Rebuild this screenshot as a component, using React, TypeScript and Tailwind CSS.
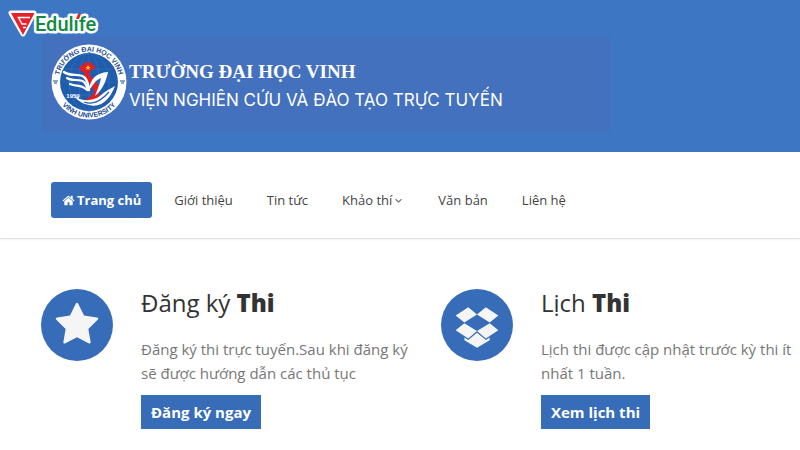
import type { ReactNode } from 'react'

const navItems = [
  { label: 'Giới thiệu' },
  { label: 'Tin tức' },
  { label: 'Khảo thí', hasMenu: true },
  { label: 'Văn bản' },
  { label: 'Liên hệ' },
]

const icons = {
  home: 'M1472 992v480q0 26-19 45t-45 19h-384v-384h-256v384h-384q-26 0-45-19t-19-45v-480q0-1 .5-3t.5-3l575-474 575 474q1 2 1 6zm223-69l-62 74q-8 9-21 11h-3q-13 0-21-7l-692-577-692 577q-12 8-24 7-13-2-21-11l-62-74q-8-10-7-23.5t11-21.5l719-599q32-26 76-26t76 26l244 204v-195q0-14 9-23t23-9h192q14 0 23 9t9 23v408l219 182q10 8 11 21.5t-7 23.5z',
  star: 'M1728 647q0 22-26 48l-363 354 86 500q1 7 1 20 0 21-10.5 35.5t-30.5 14.5q-19 0-40-12l-449-236-449 236q-22 12-40 12-21 0-31.5-14.5t-10.5-35.5q0-6 2-20l86-500-364-354q-25-27-25-48 0-37 56-46l502-73 225-455q19-41 49-41t49 41l225 455 502 73q56 9 56 46z',
  dropbox: 'M402 829l494 305-342 285-490-319zm986 555v108l-490 293v1l-1-1-1 1v-1l-489-293v-108l147 96 342-284v-2l1 1 1-1v2l343 284zm-834-1178l342 285-494 304-338-270zm836 623l338 271-489 319-343-285zm-151-623l489 319-338 270-494-304z',
  angleDown: 'M1395 736q0 13-10 23l-466 466q-10 10-23 10t-23-10l-466-466q-10-10-10-23t10-23l50-50q10-10 23-10t23 10l393 393 393-393q10-10 23-10t23 10l50 50q10 10 10 23z',
}

function Icon({ path, className }: { path: string; className: string }) {
  return (
    <svg viewBox="0 0 1792 1792" fill="currentColor" className={className} aria-hidden="true">
      <path d={path} />
    </svg>
  )
}

function EdulifeLogo() {
  return (
    <svg viewBox="0 0 100 32" className="absolute left-1 top-2 h-8 w-[100px]" role="img" aria-label="Edulife">
      <g stroke="#fff" strokeWidth="5" strokeLinejoin="round" fill="#fff">
        <path d="M7 5H30L19 26Z" />
        <text x="31" y="23" fontSize="20" fontWeight="500" fontFamily="Roboto, sans-serif">Edulife</text>
      </g>
      <path d="M7 5H30.500L19 27Z" fill="#e8212b" />
      <path d="M26 9.500H14.500L18 16H22.500M19 19.500H22" fill="none" stroke="#fff" strokeWidth="1.500" />
      <text x="31" y="23" fontSize="20" fontWeight="500" fontFamily="Roboto, sans-serif" fill="#118a43" aria-hidden="true">Edulife</text>
      <path d="M71 6H77V11H71Z" fill="#fff" />
      <path d="M72 11L74 6H77L75 11Z" fill="#e8212b" />
    </svg>
  )
}

function Emblem() {
  return (
    <svg viewBox="0 0 76 76" className="size-[76px] shrink-0" role="img" aria-label="Vinh University">
      <defs>
        <path id="ring-top" d="M7.500 38A30.500 30.500 0 0 1 68.500 38" />
        <path id="ring-bottom" d="M2.500 38A35.500 35.500 0 0 0 73.500 38" />
      </defs>
      <circle cx="38" cy="38" r="37.500" fill="#fff" />
      <circle cx="38" cy="38" r="29" fill="#1f5cad" />
      <g fill="none" stroke="#3a74bf" strokeWidth=".6">
        <ellipse cx="38" cy="38" rx="10" ry="29" />
        <ellipse cx="38" cy="38" rx="20" ry="29" />
        <path d="M38 9V67M9 38H67M14 25H62M14 51H62" />
      </g>
      <path d="M28 23L31 21H33L34 18L37 19L39 17L41 21L45 22L43 25L40 26L38 29L40 33L45 38L49 44L48 52L44 56L37 59L34 56L39 53L43 49L42 44L36 37L33 32L34 29L30 27Z" fill="#e51d23" />
      <path d="M37 21L38 23H40L38 24L39 26L37 25L35 26L36 24L34 23H36Z" fill="#ffd21c" />
      {/* wings */}
      <g fill="none" stroke="#fff" strokeLinecap="round">
        <path d="M13 28C19 33 28 29 33 33C37 36 37 41 38 46" strokeWidth="2.400" />
        <path d="M16 34C22 38 29 34 33 38C35 40 36 43 37 46" strokeWidth="2.200" />
        <path d="M19 40C25 43 30 40 36 46" strokeWidth="2.200" />
      </g>
      <path d="M38 46C39 35 45 29 57 28C55 38 51 46 44 52C46 46 49 40 50 34C44 36 42 42 38 46Z" fill="#fff" />
      <path d="M23 52C32 58 42 57 49 52C54 47 59 45 64 42C60 53 51 65 38 61C32 60 27 57 23 52Z" fill="#fff" />
      <path d="M33 58C43 62 51 56 58 48" fill="none" stroke="#1f5cad" strokeWidth="1.200" />
      <g fill="#1d4b94" fontFamily="Liberation Sans, sans-serif" fontWeight="700" textAnchor="middle">
        <text fontSize="7"><textPath href="#ring-top" startOffset="50%">TRƯỜNG ĐẠI HỌC VINH</textPath></text>
        <text fontSize="7"><textPath href="#ring-bottom" startOffset="50%">VINH UNIVERSITY</textPath></text>
        <text x="22" y="54" fontSize="6" fill="#fff">1959</text>
      </g>
      <path d="M2 37H7M3 39H6M69 37H74M70 39H73" stroke="#1d4b94" strokeWidth="1" />
    </svg>
  )
}

function Service({ icon, title, children, action }: { icon: string; title: string; children: ReactNode; action: string }) {
  return (
    <section className="flex items-start gap-7 pl-[41px]">
      <div className="flex size-18 shrink-0 items-center justify-center rounded-full bg-[#376cb8] text-[#f5f5f5]">
        <Icon path={icon} className="size-[46px]" />
      </div>
      <div>
        <h2 className="text-2xl leading-7 text-[#333]">
          {title} <strong className="font-extrabold">Thi</strong>
        </h2>
        <p className="mt-5 mb-[10px] text-[15px] leading-6 whitespace-nowrap text-[#777]">{children}</p>
        <button type="button" className="h-[34px] bg-[#376cb8] px-[10px] text-[15px] font-bold text-white">{action}</button>
      </div>
    </section>
  )
}

export default function App() {
  return (
    <div className="min-h-screen bg-white font-['Open_Sans',sans-serif]">
      <header className="relative bg-[#3d76c2] px-[42px] pt-9 pb-5">
        <EdulifeLogo />
        <div className="flex h-24 max-w-[568px] items-start gap-[2px] bg-[#4371be] px-[9px] pt-2 text-white">
          <Emblem />
          <div className="pt-[14px]">
            <h1 className="font-['Liberation_Serif',serif] text-[19px] leading-7 font-bold">TRƯỜNG ĐẠI HỌC VINH</h1>
            <p className="font-[Inter,sans-serif] text-[17px] leading-7 whitespace-nowrap">VIỆN NGHIÊN CỨU VÀ ĐÀO TẠO TRỰC TUYẾN</p>
          </div>
        </div>
      </header>

      <nav className="flex items-center border-b border-[#e2e2e2] px-[51px] pt-[30px] pb-5 text-[13px] text-[#444] shadow-xs">
        <a href="#" className="mr-[11px] flex h-9 items-center gap-[2px] rounded-[3px] bg-[#376cb8] px-[11px] pt-px font-bold text-white">
          <Icon path={icons.home} className="size-[13px]" />
          Trang chủ
        </a>
        {navItems.map((item) => (
          <a key={item.label} href="#" className="mr-3 flex h-9 items-center gap-px px-[11px] pt-px">
            {item.label}
            {item.hasMenu && <Icon path={icons.angleDown} className="size-[11px]" />}
          </a>
        ))}
      </nav>

      <main className="grid grid-cols-2 pt-[50px]">
        <Service icon={icons.star} title="Đăng ký" action="Đăng ký ngay">
          Đăng ký thi trực tuyến.Sau khi đăng ký<br />sẽ được hướng dẫn các thủ tục
        </Service>
        <Service icon={icons.dropbox} title="Lịch" action="Xem lịch thi">
          Lịch thi được cập nhật trước kỳ thi ít<br />nhất 1 tuần.
        </Service>
      </main>
    </div>
  )
}
